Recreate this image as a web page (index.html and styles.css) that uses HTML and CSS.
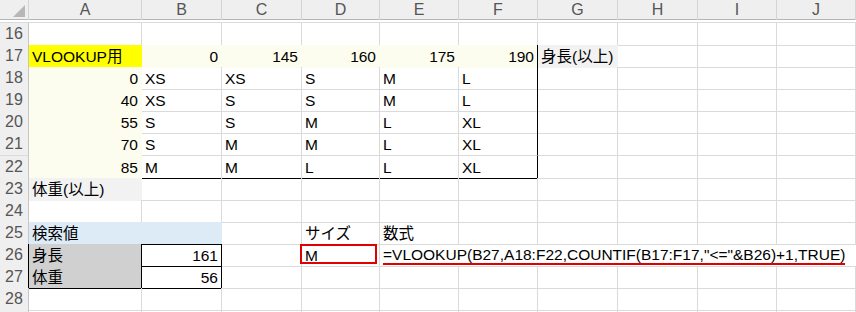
FILE: index.html
```html
<!DOCTYPE html>
<html lang="ja">
<head>
<meta charset="utf-8">
<link rel="stylesheet" href="styles.css">
</head>
<body>
<div class="sheet">
  <div class="colhead">
    <div class="corner"><span class="tri"></span></div>
    <div class="ch">A</div><div class="ch">B</div><div class="ch">C</div><div class="ch">D</div><div class="ch">E</div><div class="ch">F</div><div class="ch">G</div><div class="ch">H</div><div class="ch">I</div><div class="ch">J</div>
  </div>
  <div class="gap"></div>
  <div class="grid">
    <div class="row"><div class="rh">16</div><div class="c bb"></div><div class="c bb"></div><div class="c bb"></div><div class="c bb"></div><div class="c bb"></div><div class="c bb"></div><div class="c"></div><div class="c"></div><div class="c"></div><div class="c"></div></div>
    <div class="row"><div class="rh">17</div><div class="c yellow">VLOOKUP用</div><div class="c ly num">0</div><div class="c ly num">145</div><div class="c ly num">160</div><div class="c ly num">175</div><div class="c ly num br">190</div><div class="c gray">身長(以上)</div><div class="c"></div><div class="c"></div><div class="c"></div></div>
    <div class="row"><div class="rh">18</div><div class="c ly num">0</div><div class="c">XS</div><div class="c">XS</div><div class="c">S</div><div class="c">M</div><div class="c br">L</div><div class="c"></div><div class="c"></div><div class="c"></div><div class="c"></div></div>
    <div class="row"><div class="rh">19</div><div class="c ly num">40</div><div class="c">XS</div><div class="c">S</div><div class="c">S</div><div class="c">M</div><div class="c br">L</div><div class="c"></div><div class="c"></div><div class="c"></div><div class="c"></div></div>
    <div class="row"><div class="rh">20</div><div class="c ly num">55</div><div class="c">S</div><div class="c">S</div><div class="c">M</div><div class="c">L</div><div class="c br">XL</div><div class="c"></div><div class="c"></div><div class="c"></div><div class="c"></div></div>
    <div class="row"><div class="rh">21</div><div class="c ly num">70</div><div class="c">S</div><div class="c">M</div><div class="c">M</div><div class="c">L</div><div class="c br">XL</div><div class="c"></div><div class="c"></div><div class="c"></div><div class="c"></div></div>
    <div class="row"><div class="rh">22</div><div class="c ly num bb">85</div><div class="c bb">M</div><div class="c bb">M</div><div class="c bb">L</div><div class="c bb">L</div><div class="c br bb">XL</div><div class="c"></div><div class="c"></div><div class="c"></div><div class="c"></div></div>
    <div class="row"><div class="rh">23</div><div class="c gray">体重(以上)</div><div class="c"></div><div class="c"></div><div class="c"></div><div class="c"></div><div class="c"></div><div class="c"></div><div class="c"></div><div class="c"></div><div class="c"></div></div>
    <div class="row"><div class="rh">24</div><div class="c"></div><div class="c"></div><div class="c"></div><div class="c"></div><div class="c"></div><div class="c"></div><div class="c"></div><div class="c"></div><div class="c"></div><div class="c"></div></div>
    <div class="row"><div class="rh">25</div><div class="c blue bb">検索値</div><div class="c blue bb"></div><div class="c"></div><div class="c">サイズ</div><div class="c">数式</div><div class="c"></div><div class="c"></div><div class="c"></div><div class="c"></div><div class="c"></div></div>
    <div class="row"><div class="rh rhb">26</div><div class="c dgray bb br">身長</div><div class="c num bb br">161</div><div class="c"></div><div class="c boxed"><span class="redbox"></span>M</div><div class="c formula"><span class="ftext">=VLOOKUP(B27,A18:F22,COUNTIF(B17:F17,"&lt;="&amp;B26)+1,TRUE)</span></div></div>
    <div class="row"><div class="rh rhb">27</div><div class="c dgray bb br">体重</div><div class="c num bb br">56</div><div class="c"></div><div class="c"></div><div class="c"></div><div class="c"></div><div class="c"></div><div class="c"></div><div class="c"></div><div class="c"></div></div>
    <div class="row"><div class="rh">28</div><div class="c"></div><div class="c"></div><div class="c"></div><div class="c"></div><div class="c"></div><div class="c"></div><div class="c"></div><div class="c"></div><div class="c"></div><div class="c"></div></div>
    <div class="row"><div class="rh"></div><div class="c"></div><div class="c"></div><div class="c"></div><div class="c"></div><div class="c"></div><div class="c"></div><div class="c"></div><div class="c"></div><div class="c"></div><div class="c"></div></div>
  </div>
</div>
</body>
</html>
```

FILE: styles.css
```css
* { box-sizing: border-box; }
html, body { margin: 0; padding: 0; background: #fff; }
body {
  width: 856px;
  height: 312px;
  overflow: hidden;
  font-family: "Liberation Sans", "Noto Sans CJK JP", sans-serif;
  font-size: 15.5px;
  color: #000;
}
.sheet { display: flex; flex-direction: column; }
.colhead, .row {
  display: grid;
  grid-template-columns: 29px 113px 80px 80px 78px 79px 79px 80px 80px 79px 79px;
}
.colhead {
  height: 20px;
  background: #efefef;
  border-bottom: 1px solid #b5b5b5;
}
.corner {
  position: relative;
  border-right: 1px solid #d4d4d4;
}
.tri {
  position: absolute;
  right: 3px;
  bottom: 3px;
  width: 0;
  height: 0;
  border-left: 12px solid transparent;
  border-bottom: 12px solid #b7b7b7;
}
.ch {
  border-right: 1px solid #d4d4d4;
  color: #555;
  text-align: center;
  line-height: 20px;
  font-size: 16px;
}
.gap { height: 3px; border-bottom: 1px solid #dadada; }
.grid { display: flex; flex-direction: column; }
.row { height: 22.1px; }
.rh {
  background: #efefef;
  border-right: 1px solid #c6c6c6;
  border-bottom: 1px solid #dadada;
  color: #555;
  text-align: center;
  line-height: 22px;
  font-size: 16px;
}
.c {
  border-right: 1px solid #dadada;
  border-bottom: 1px solid #dadada;
  padding: 0 3px 1px;
  display: flex;
  align-items: flex-end;
  white-space: nowrap;
  line-height: 18px;
}
.num { justify-content: flex-end; }
.yellow { background: #ffff00; border-color: #ffff00; }
.ly { background: #fdfdef; border-color: #fdfdef; }
.gray { background: #f2f2f2; border-color: #f2f2f2; }
.blue { background: #ddebf7; border-color: #ddebf7; }
.dgray { background: #d0d0d0; border-color: #d0d0d0; }
.bb { border-bottom-color: #000; }
.br { border-right-color: #000; }
.rhb { border-right-color: #000; }
.boxed { position: relative; }
.redbox {
  position: absolute;
  left: -2px;
  top: 0;
  width: 77px;
  height: 20px;
  border: 2px solid #e00000;
}
.formula {
  grid-column: span 6;
  border-right: none;
  overflow: visible;
}
.ftext {
  border-bottom: 2px solid #e00000;
  line-height: 17px;
}
```
